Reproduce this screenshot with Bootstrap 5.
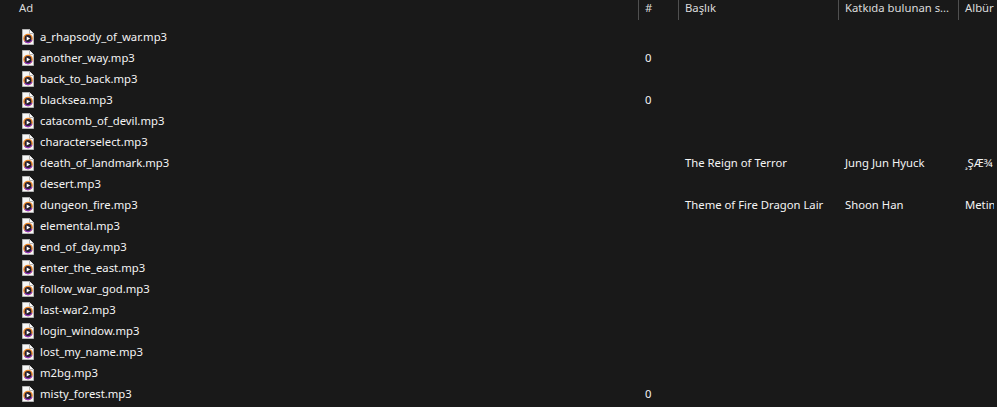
<!DOCTYPE html>
<html lang="en">
<head>
    <meta charset="UTF-8">
    <meta name="viewport" content="width=device-width, initial-scale=1.0">
    <title>Explorer</title>
    <link href="https://cdn.jsdelivr.net/npm/bootstrap@5.3.0/dist/css/bootstrap.min.css" rel="stylesheet">
    <style>
        html, body {
            height: 100%;
            overflow: hidden;
        }
        body {
            background: #191919;
            color: #f4f4f4;
            font-family: "Noto Sans", "Liberation Sans", sans-serif;
            font-size: 11.3px;
        }
        .head-row {
            height: 20px;
            margin-bottom: 6px;
            color: #dcdcdc;
        }
        .file-row {
            height: 21.03px;
        }
        .col-name { width: 638px; }
        .col-num { width: 40px; }
        .col-title { width: 160px; }
        .col-artist { width: 120px; }
        .col-album { width: 36px; }
        .cell {
            flex: none;
            padding-left: 7px;
            white-space: nowrap;
            overflow: hidden;
        }
        .file-row .cell {
            height: 21px;
            line-height: 22px;
        }
        .head-row .cell {
            height: 20px;
            line-height: 15px;
            border-left: 1px solid #505050;
            padding-left: 6px;
        }
        .head-row .col-name {
            border-left: 0;
            padding-left: 19px;
        }
        .file-row .col-name {
            padding-left: 21px;
            gap: 6px;
        }
        .file-icon {
            flex: none;
            width: 13px;
            height: 16px;
        }
        .file-name {
            padding-top: 1px;
        }
    </style>
</head>
<body>
    <svg width="0" height="0" class="position-absolute">
        <symbol id="mp3" viewBox="0 0 13 16">
            <path d="M1.5.5H8.500L12.500 4.500V15.500H1.500Z" fill="#f6f6f6" stroke="#b4b4b4"/>
            <path d="M8.500.5V4.500H12.500" fill="#fff" stroke="#b4b4b4"/>
            <circle cx="7" cy="9.500" r="4.800" fill="#ee8a2c"/>
            <path d="M3.100 12.300A4.800 4.800 0 0 0 11.500 11L7 9.500Z" fill="#8f35c4"/>
            <circle cx="7" cy="9.500" r="3.400" fill="#241e2c"/>
            <path d="M5.700 7.400V11.600L9.200 9.500Z" fill="#fff"/>
        </symbol>
    </svg>

    <div class="d-flex head-row">
        <div class="cell col-name">Ad</div>
        <div class="cell col-num">#</div>
        <div class="cell col-title">Başlık</div>
        <div class="cell col-artist">Katkıda bulunan s...</div>
        <div class="cell col-album">Albür</div>
    </div>

    <div id="fileList"></div>

    <script>
        const files = [
            ["a_rhapsody_of_war.mp3"],
            ["another_way.mp3", "0"],
            ["back_to_back.mp3"],
            ["blacksea.mp3", "0"],
            ["catacomb_of_devil.mp3"],
            ["characterselect.mp3"],
            ["death_of_landmark.mp3", "", "The Reign of Terror", "Jung Jun Hyuck", "¸ŞÆ¾"],
            ["desert.mp3"],
            ["dungeon_fire.mp3", "", "Theme of Fire Dragon Lair", "Shoon Han", "Metin"],
            ["elemental.mp3"],
            ["end_of_day.mp3"],
            ["enter_the_east.mp3"],
            ["follow_war_god.mp3"],
            ["last-war2.mp3"],
            ["login_window.mp3"],
            ["lost_my_name.mp3"],
            ["m2bg.mp3"],
            ["misty_forest.mp3", "0"],
            [""]
        ];

        const list = document.getElementById("fileList");
        files.forEach(file => {
            const row = document.createElement("div");
            row.className = "d-flex align-items-start file-row";
            row.innerHTML = `
                <div class="cell col-name d-flex align-items-center">
                    <svg class="file-icon"><use href="#mp3"></use></svg>
                    <span class="file-name">${file[0]}</span>
                </div>
                <div class="cell col-num">${file[1] || ""}</div>
                <div class="cell col-title">${file[2] || ""}</div>
                <div class="cell col-artist">${file[3] || ""}</div>
                <div class="cell col-album">${file[4] || ""}</div>
            `;
            list.appendChild(row);
        });
    </script>
    <script src="https://cdn.jsdelivr.net/npm/bootstrap@5.3.0/dist/js/bootstrap.bundle.min.js"></script>
</body>
</html>
